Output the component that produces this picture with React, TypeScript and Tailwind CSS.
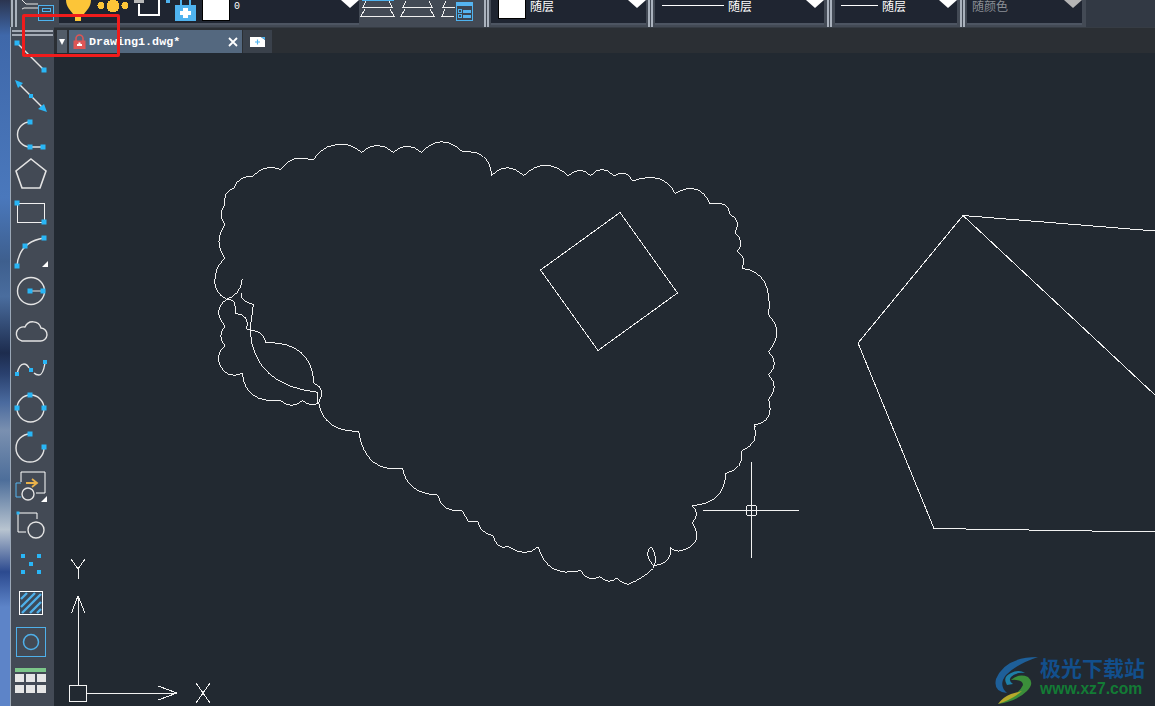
import React from 'react'

const blue = '#29b6f6'

// cloud outline, written in the coordinates of a 3x crop
const cloudTop = 'M97 432 Q92 480 50 493 Q5 470 16 420 Q22 390 45 370 Q8 320 45 268 Q22 240 45 208 Q38 170 73 158 Q85 122 128 125 Q160 85 212 103 Q245 55 310 75 Q340 20 415 30 Q435 35 455 52 Q500 10 550 52 Q590 15 634 52 Q695 -10 757 50 Q840 45 845 122'
const cloudRight = 'M35 122 Q80 75 131 122 Q195 60 265 122 Q300 90 332 122 Q365 85 402 122 Q440 100 458 138 Q550 105 585 175 Q660 135 690 207 Q745 195 750 238 Q785 255 765 292 Q795 320 772 350 Q805 370 785 400 Q880 410 866 540 Q915 590 866 650 Q900 685 866 720 Q900 755 866 793 Q885 860 823 870 L826 876'
const cloudBottom = 'M1333 77 Q1350 130 1295 153 Q1300 210 1247 220 Q1245 310 1147 317 Q1172 340 1147 368 Q1185 430 1115 452 Q1095 458 1080 440 Q1090 490 1030 497 Q1000 460 1023 440 Q1045 470 1030 505 Q1000 535 955 553 Q935 550 920 535 Q895 555 870 530 Q835 550 812 512 Q710 535 685 440 Q650 475 595 440 Q560 450 550 408 Q505 395 505 365 L475 365 L457 332 Q400 340 382 285 Q290 280 278 205 Q165 220 146 94 Q40 95 25 5'
const cloudLeft = 'M325 805 Q350 760 312 745 Q305 620 168 623 Q160 585 110 583 Q122 540 75 535 Q82 490 50 493 Q5 525 45 573 Q20 605 45 632 Q15 660 30 690 Q50 735 97 715 Q105 805 212 797 Q245 825 278 797 Q300 815 325 805 M322 805 L322 772 Q130 750 120 585 L130 508 Q90 500 93 475'

function Tri({ className }: { className?: string }) {
  return <svg width="18" height="8" viewBox="0 0 18 8" className={className}><path d="M0 0H18L9 8Z" fill="currentColor" /></svg>
}

function Combo({ w, swatch, line, lineLeft = 7, label, muted }: { w: string; swatch?: boolean; line?: number; lineLeft?: number; label: string; muted?: boolean }) {
  return (
    <div className={`${w} h-[25px] shrink-0 bg-[#1f2531] border-b-2 border-[#4d5562] flex items-start relative`}>
      {swatch && <div className="w-7 h-[19px] bg-white border border-black border-t-0 ml-[7px] mr-1 shrink-0" />}
      {line ? <div className="h-px bg-white mt-[5px] mr-1 shrink-0" style={{ width: line, marginLeft: lineLeft }} /> : null}
      <span className={`text-[12px] leading-[12px] ${muted ? 'text-[#8b8f96] ml-[5px]' : 'text-white'}`}>{label}</span>
      <Tri className={`absolute top-0 right-0 ${muted ? 'text-[#b5b5b5]' : 'text-white'}`} />
    </div>
  )
}

function Grip({ w }: { w: string }) {
  return <div className={`${w} h-[27px] shrink-0 flex justify-center gap-[1px]`}><div className="w-[2px] bg-[#aab2bd]" /><div className="w-[2px] bg-[#aab2bd]" /></div>
}

function TopBar() {
  return (
    <div className="h-[27px] flex shrink-0 bg-[#323944]">
      <div className="w-[349px] shrink-0 flex bg-[#434a55]">
        <div className="w-[12px] shrink-0 flex gap-[2px] pl-[1px]"><div className="w-[2px] h-[27px] bg-[#aab2bd]" /><div className="w-[2px] h-[27px] bg-[#aab2bd]" /></div>
        <svg width="37" height="27" viewBox="0 0 37 27" className="shrink-0">
          <path d="M0 0L4 4H16M0 9L2 8H16" stroke="#e8e8e8" strokeWidth="1" fill="none" />
          <rect x="16.500" y="5.500" width="15" height="15" fill="#3b4451" stroke="#4fb3ef" />
          <rect x="20.500" y="8.500" width="8" height="3" fill="none" stroke="#4fb3ef" />
        </svg>
        <div className="flex-1 h-[25px] bg-[#1f2531] border-b-2 border-[#4d5562] flex relative">
          <svg width="116" height="23" viewBox="0 0 116 23" className="shrink-0">
            <path d="M7 0H32C32 7 27 11 25 14H14C12 11 7 7 7 0Z" fill="#fcc538" />
            <rect x="16" y="14" width="6" height="7" fill="#fcc538" />
            <g shapeRendering="crispEdges" fill="#fcc538">
              <circle cx="54" cy="6" r="6.500" />
              <circle cx="42" cy="5.500" r="3.500" />
              <circle cx="66" cy="5.500" r="3.500" />
            </g>
            <path d="M80 4V15H100V0" stroke="#fff" strokeWidth="2" fill="none" />
            <rect x="75" y="0" width="10" height="3" fill="#b9b9b9" />
            <rect x="107" y="0" width="4" height="3" fill="#4fb3ef" />
          </svg>
          <div className="flex items-start">
            <svg width="22" height="22" viewBox="0 0 22 22" className="shrink-0">
              <path d="M5 0H7V5H14V0H16V5H21V21H0V5H5Z" fill="#4fb3ef" />
              <path d="M8 8H13V11H16V15H13V18H8V15H5V11H8Z" fill="#fff" />
            </svg>
            <div className="w-7 h-[21px] bg-white border border-black border-t-0 ml-[5px] shrink-0" />
            <span className="text-white text-[10px] leading-[12px] mt-[1px] ml-1 font-['Liberation_Mono',monospace]">0</span>
          </div>
          <Tri className="absolute top-0 right-0 text-white" />
        </div>
      </div>
      <div className="w-[123px] bg-[#434a55] shrink-0">
        <svg width="123" height="27" viewBox="0 0 123 27" className="block" shapeRendering="crispEdges">
          <path d="M3 0.500H35" stroke="#4fb3ef" />
          <path d="M7 1L4 7H33L30 1M6 9L2 16H35L31 9" stroke="#f0f0f0" fill="none" />
          <path d="M47 1L44 7H73L70 1M46 9L42 16H75L71 9" stroke="#f0f0f0" fill="none" />
          <path d="M87 1L84 7H96M86 9L83 16H95" stroke="#f0f0f0" fill="none" />
          <rect x="97.500" y="2.500" width="16" height="18" fill="#3c4552" stroke="#4fb3ef" />
          <rect x="97" y="2" width="17" height="4" fill="#55b4f0" />
          <rect x="99.500" y="9.500" width="3" height="3" fill="none" stroke="#4fb3ef" /><rect x="104" y="10" width="8" height="3" fill="#55b4f0" />
          <rect x="99.500" y="14.500" width="3" height="3" fill="none" stroke="#4fb3ef" /><rect x="104" y="15" width="8" height="3" fill="#55b4f0" />
        </svg>
      </div>
      <div className="flex bg-[#434a55] w-[604px] shrink-0 font-['Noto_Sans_CJK_SC',sans-serif]">
        <Grip w="w-[9px]" />
        <Combo w="w-[155px]" swatch label="随层" />
        <Grip w="w-[9px]" />
        <Combo w="w-[169px]" line={62} label="随层" />
        <Grip w="w-[11px]" />
        <Combo w="w-[122px]" line={37} lineLeft={6} label="随层" />
        <Grip w="w-[10px]" />
        <Combo w="w-[115px]" label="随颜色" muted />
      </div>
    </div>
  )
}

function TabBar() {
  return (
    <div className="h-[26px] flex shrink-0 items-end bg-[#2b2f34] border-t border-[#363c44] pl-[3px]">
      <div className="w-[10px] h-[23px] bg-[#525c68] flex items-center justify-center"><svg width="6" height="6" viewBox="0 0 6 6"><path d="M0 0H6L3 6Z" fill="#fff" /></svg></div>
      <div className="w-[2px]" />
      <div className="w-[173px] h-[23px] bg-[#54687f] flex items-center relative">
        <svg width="13" height="15" viewBox="0 0 13 15" className="ml-[4px] shrink-0">
          <path d="M3 7V4.500a3.500 3.500 0 0 1 7 0V7" stroke="#dd5656" strokeWidth="1.600" fill="none" />
          <rect x="0.500" y="6.500" width="12" height="8.500" fill="#dd5656" />
          <path d="M5.500 8.500h2v1.500h1.500v2h-5v-2h1.500z" fill="#fff" />
        </svg>
        <span className="text-white text-[11.700px] leading-[14px] font-bold ml-[3px] font-['Liberation_Mono',monospace]">Drawing1.dwg*</span>
        <svg width="10" height="10" viewBox="0 0 10 10" className="absolute right-[4px] top-[7px]"><path d="M1 1L9 9M9 1L1 9" stroke="#fff" strokeWidth="1.800" /></svg>
      </div>
      <div className="w-[1px]" />
      <div className="w-[29px] h-[23px] bg-[#3a414b] flex items-center justify-center">
        <svg width="15" height="10" viewBox="0 0 15 10"><path d="M0 0H11L15 3V10H0Z" fill="#fff" /><path d="M11 0L15 0V3Z" fill="#4fb3ef" /><path d="M7.500 2.500V7.500M5 5H10" stroke="#4fb3ef" strokeWidth="1.200" /></svg>
      </div>
    </div>
  )
}

// each tool is a 44x39 box
function Tool({ children }: { children: React.ReactNode }) {
  return <svg width="43" height="39" viewBox="0 0 43 39" className="shrink-0 block">{children}</svg>
}

const dot = (x: number, y: number, s = 5) => <rect x={x - s / 2} y={y - s / 2} width={s} height={s} fill={blue} />
const line = { stroke: '#e4e4e4', strokeWidth: 1.400, fill: 'none' }

function LeftBar() {
  return (
    <div className="w-[44px] shrink-0 bg-[#434a55] border-l border-[#9aa7b6] overflow-hidden">
      <div className="h-[10px] pt-[3px] flex flex-col gap-[2px] px-[1px]">
        <div className="h-[2px] bg-[#a4abb5]" />
        <div className="h-[2px] bg-[#a4abb5]" />
      </div>
      <Tool>
        <path d="M6 6L33 33" {...line} />{dot(6, 6)}{dot(33, 33)}
      </Tool>
      <Tool>
        <path d="M6 6L34 34" {...line} />
        <path d="M4 4L12 7L7 12Z M36 36L27 33L33 28Z" fill={blue} />
        {dot(20, 20, 4)}
      </Tool>
      <Tool>
        <path d="M19 7A12.500 12.500 0 0 0 19 32H32" {...line} />
        {dot(19, 7)}{dot(19, 32)}{dot(32, 32)}
      </Tool>
      <Tool>
        <path d="M20 5L35 17L29 34H11L5 17Z" {...line} strokeWidth={1.600} />
      </Tool>
      <Tool>
        <rect x="6.500" y="10.500" width="27" height="19" fill="none" stroke="#f0f0f0" />
        {dot(6, 10)}{dot(33, 29)}
      </Tool>
      <Tool>
        <path d="M6 34Q8 10 33 6" {...line} />
        {dot(6, 34)}{dot(14, 14)}{dot(33, 6)}
        <path d="M31 35H37V29Z" fill="#fff" />
      </Tool>
      <Tool>
        <circle cx="20" cy="20" r="13.500" {...line} />
        <path d="M20 20H32" stroke="#e4e4e4" />
        {dot(19, 20)}{dot(32, 20)}
      </Tool>
      <Tool>
        <path d="M11 31H29A6.500 6.500 0 0 0 30 18A8.500 8.500 0 0 0 14 17A7 7 0 0 0 11 31Z" {...line} />
      </Tool>
      <Tool>
        <path d="M6 25Q8 15 13 15Q16 15 18 19M23 24Q25 26 28 26Q32 26 34 14" {...line} />
        {dot(6, 25, 4)}{dot(20, 21, 4)}{dot(34, 13, 4)}
      </Tool>
      <Tool>
        <ellipse cx="19.500" cy="20.500" rx="13.500" ry="13.500" {...line} />
        {dot(19, 7)}{dot(6, 20)}{dot(33, 20)}
      </Tool>
      <Tool>
        <path d="M19 7A14 14 0 1 0 33 21" {...line} />
        {dot(19, 7)}{dot(33, 20)}
      </Tool>
      <Tool>
        <path d="M10 16V6H34V27H25" stroke="#fff" fill="none" />
        <path d="M10 17H5V31H10" stroke="#55b4f0" fill="none" />
        <path d="M15 17H25M21 13L26 17L21 21" stroke="#e9b24a" strokeWidth="1.800" fill="none" />
        <circle cx="17" cy="28" r="6" {...line} />
        <path d="M30 36H36V30Z" fill="#fff" />
      </Tool>
      <Tool>
        <path d="M7 8H26V14M7 8V27H15" stroke="#fff" fill="none" />
        <circle cx="25" cy="25" r="8" {...line} />
        {dot(7, 8, 3)}
      </Tool>
      <Tool>
        {dot(12, 12, 4)}{dot(28, 12, 4)}{dot(20, 20, 4)}{dot(12, 28, 4)}{dot(28, 28, 4)}
      </Tool>
      <Tool>
        <rect x="8.500" y="8.500" width="23" height="23" fill="#3b4a5a" stroke="#fff" />
        <path d="M10 16L16 10M10 24L24 10M11 30L30 11M19 30L30 19M26 30L30 26" stroke="#4fb0ea" strokeWidth="2.400" />
      </Tool>
      <Tool>
        <rect x="5.500" y="5.500" width="29" height="29" fill="none" stroke="#4fb0ea" />
        <circle cx="20" cy="20" r="7.500" fill="none" stroke="#4fb0ea" strokeWidth="1.500" />
      </Tool>
      <Tool>
        <rect x="4" y="7" width="31" height="4" fill="#7cc68a" />
        {[13, 24].map(y => [4, 15, 26].map(x => <rect key={`${x}-${y}`} x={x} y={y} width="9" height="8" fill="#e6e6e6" />))}
      </Tool>
    </div>
  )
}

function Canvas() {
  return (
    <svg className="flex-1 min-h-0 block" viewBox="54 53 1101 653" shapeRendering="crispEdges">
      <g fill="none" stroke="#f2f2f2" strokeWidth="1">
        <g transform="translate(210 135) scale(0.3333)" strokeWidth="3">
          <path d={cloudTop} />
          <path d={cloudLeft} />
        </g>
        <g transform="translate(480 135) scale(0.3333)" strokeWidth="3">
          <path d={cloudRight} />
        </g>
        <g transform="translate(310 400) scale(0.3333)" strokeWidth="3">
          <path d={cloudBottom} />
        </g>
        {/* square and polygon */}
        <path d="M620 212.500L677.500 293L598 350.500L540.500 270Z" />
        <path d="M1155 231L963 215.500L858 343L934 528.500L1155 532M963 215.500L1155 395" />
        {/* crosshair */}
        <path d="M751.500 462V558M703 510.500H799" />
        <rect x="746.500" y="505.500" width="10" height="10" rx="2" />
        <path d="M746 510.500H757M751.500 505V516" />
        {/* ucs icon */}
        <path d="M78.500 685V596M71.500 613L78 596L85 613" />
        <rect x="69.500" y="685.500" width="17" height="16" />
        <path d="M87 693.500H177M158 686L177 693L158 700" />
        <path d="M71 559L78 569V579M85 559L78 569" />
        <path d="M196 683L210 703M210 683L196 703" />
      </g>
    </svg>
  )
}

function Watermark() {
  return (
    <div className="absolute right-[10px] top-[655px] flex items-start">
      <svg width="46" height="50" viewBox="0 0 46 50" className="shrink-0 -ml-[2px]">
        <path d="M45 2Q12 2 3 24Q0 37 14 38Q5 30 13 20Q24 9 45 2Z" fill="#1e5f99" />
        <path d="M14 30Q9 22 18 18Q26 14 32 18Q22 17 18 22Q15 26 20 29Z" fill="#1e7fa8" />
        <path d="M18 25Q26 18 35 22Q42 28 34 36Q24 46 5 49Q26 40 30 30Q30 24 18 25Z" fill="#3b8f3a" />
        <path d="M5 49Q20 44 29 36L18 39Q10 42 5 49Z" fill="#b7a92b" />
      </svg>
      <div className="flex flex-col ml-[1px]">
        <span className="text-[21px] leading-[25px] font-bold text-[#124f8c] font-['Noto_Sans_CJK_SC',sans-serif]">极光下载站</span>
        <span className="text-[15.700px] leading-[17px] font-bold text-[#137b35] font-['Liberation_Sans',sans-serif]">www.xz7.com</span>
      </div>
    </div>
  )
}

export default function App() {
  return (
    <div className="w-[1155px] h-[706px] overflow-hidden relative flex bg-[#222931]">
      {/* desktop showing behind the window */}
      <div className="w-[10px] shrink-0 bg-[linear-gradient(180deg,#2b3550_0%,#3f68aa_5%,#4a78bc_28%,#3e5f8e_37%,#4a6d9e_42%,#1d2c4e_50%,#2a416f_53%,#4a6a9e_57%,#7a90b0_61%,#4d6e9a_68%,#b8c4d0_75%,#2c4a8f_81%,#5d84c8_86%,#5d84c8_100%)]" />
      <div className="flex-1 flex flex-col min-w-0">
        <TopBar />
        <div className="flex-1 flex min-h-0">
          <LeftBar />
          <div className="flex-1 flex flex-col min-w-0">
            <TabBar />
            <Canvas />
          </div>
        </div>
      </div>
      <Watermark />
      {/* red annotation */}
      <div className="absolute left-[22px] top-[14px] w-[98px] h-[43px] border-[3px] border-[#f01c1c] rounded-[2px]" />
    </div>
  )
}
